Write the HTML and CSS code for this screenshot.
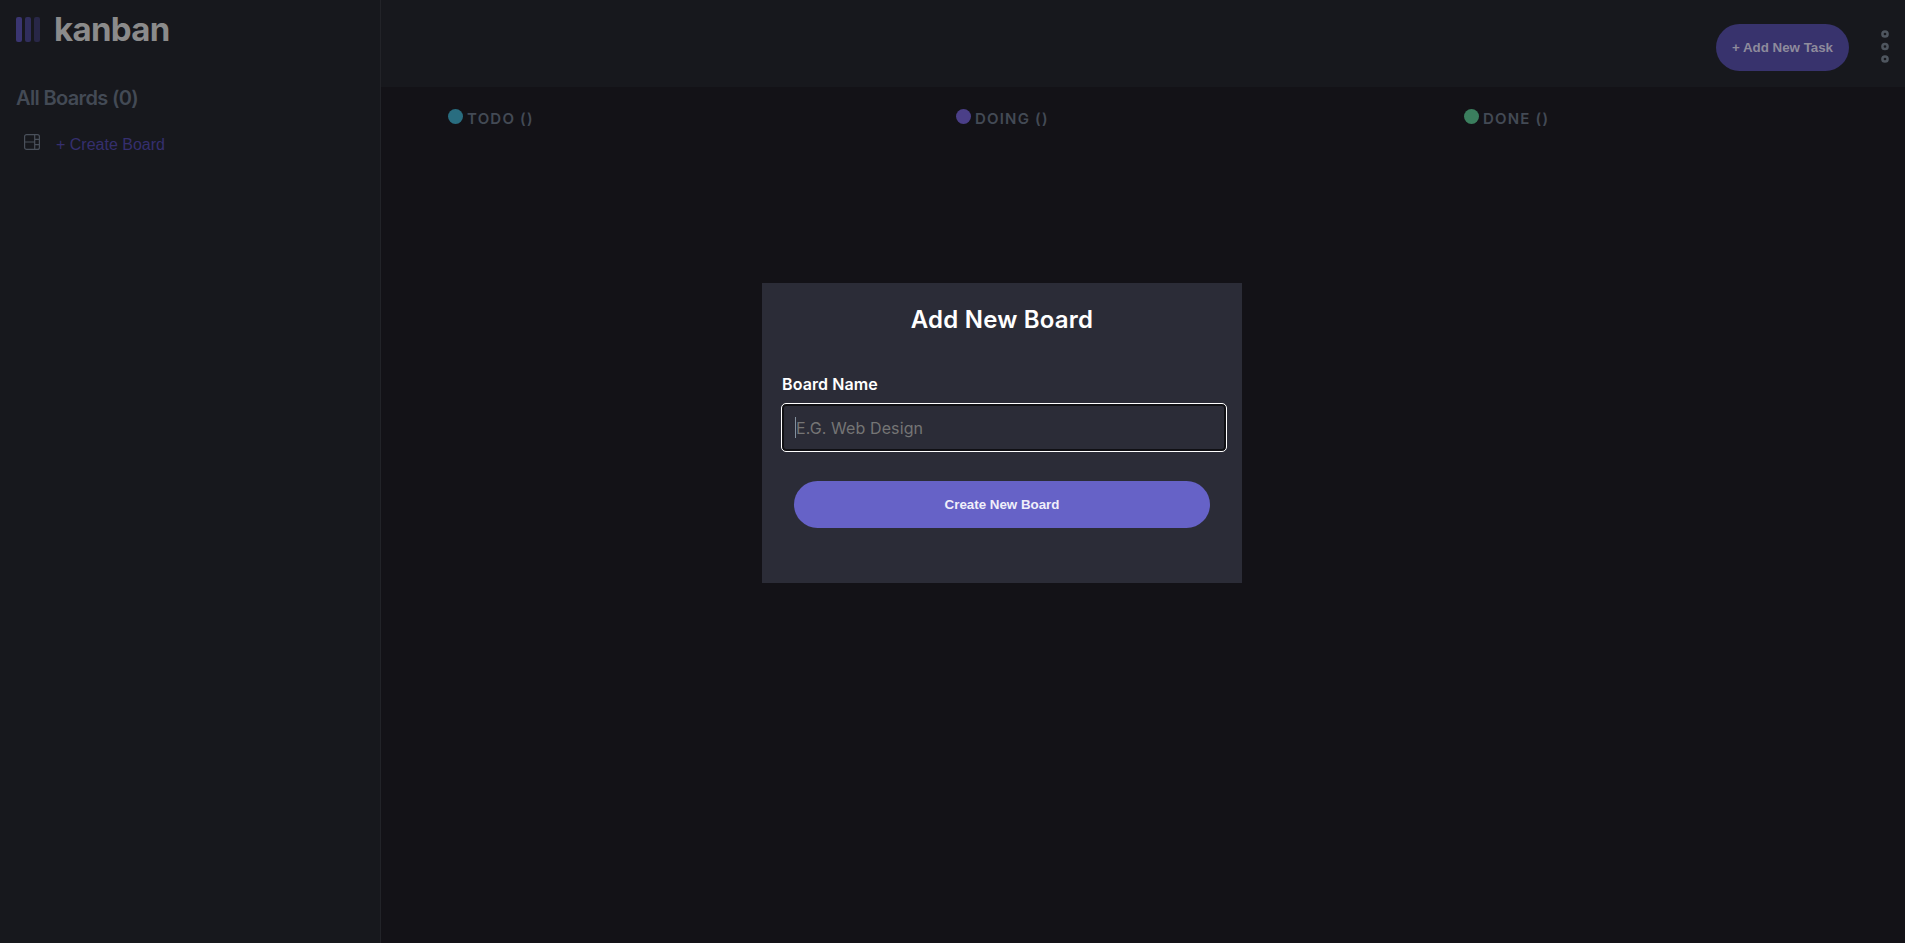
FILE: index.html
```html
<!DOCTYPE html>
<html lang="en">
<head>
<meta charset="utf-8">
<title>Kanban</title>
<link rel="stylesheet" href="styles.css">
</head>
<body>
<div class="app">
  <aside class="sidebar">
    <div class="logo">
      <svg class="logo-mark" width="24" height="25" viewBox="0 0 24 25"><g fill="#3a3571"><rect width="6" height="25" rx="2"/><rect x="9" width="6" height="25" rx="2" opacity=".75"/><rect x="18" width="6" height="25" rx="2" opacity=".5"/></g></svg>
      <span class="logo-text">kanban</span>
    </div>
    <h2 class="boards-title">All Boards (0)</h2>
    <div class="create-row">
      <svg width="16" height="16" viewBox="0 0 16 16" fill="none" stroke="#4a505b" stroke-width="1.2"><rect x=".6" y=".6" width="14.8" height="14.8" rx="2"/><path d="M10.7.6v14.8M.6 8h10.1M10.7 5.3h4.7M10.7 10.7h4.7"/></svg>
      <a class="create-link">+ Create Board</a>
    </div>
  </aside>
  <div class="content">
    <header class="header">
      <button class="button add-task">+ Add New Task</button>
      <svg class="menu" width="8" height="33" viewBox="0 0 8 33" fill="none" stroke="#4f565f" stroke-width="2.5"><circle cx="4" cy="4" r="2.6"/><circle cx="4" cy="16.5" r="2.6"/><circle cx="4" cy="29" r="2.6"/></svg>
    </header>
    <main class="columns">
      <section class="column"><span class="dot todo"></span><h3 class="column-title">TODO ()</h3></section>
      <section class="column"><span class="dot doing"></span><h3 class="column-title">DOING ()</h3></section>
      <section class="column"><span class="dot done"></span><h3 class="column-title">DONE ()</h3></section>
    </main>
  </div>
</div>
<form class="modal">
  <h1 class="modal-title">Add New Board</h1>
  <label class="label" for="name">Board Name</label>
  <div class="field"><span class="caret"></span><input class="input" id="name" placeholder="E.G. Web Design"></div>
  <button class="button create-board" type="button">Create New Board</button>
</form>
</body>
</html>
```
FILE: styles.css
```css
* { box-sizing: border-box; }
body { margin: 0; background: #131217; font-family: Inter, "Liberation Sans", sans-serif; overflow: hidden; }
h1, h2, h3 { margin: 0; }
.app { display: flex; height: 943px; }
.sidebar { width: 381px; flex: none; background: #17181d; border-right: 1px solid #222328; padding: 10px 16px; }
.logo { display: flex; height: 40px; gap: 14px; }
.logo-mark { margin-top: 7px; }
.logo-text { font-size: 33px; line-height: 38px; font-weight: 700; color: #8b8b8b; letter-spacing: -0.7px; }
.boards-title { margin-top: 34px; font-size: 20px; line-height: 28px; font-weight: 600; color: #434a55; letter-spacing: -0.65px; white-space: nowrap; }
.create-row { display: flex; align-items: center; margin-top: 20px; padding-left: 8px; gap: 16px; height: 20px; }
.create-link { font: 16px/20px "Liberation Sans", sans-serif; color: #352f6e; padding-top: 5px; }
.content { flex: 1; }
.header { height: 87px; background: #17181d; display: flex; justify-content: flex-end; align-items: flex-start; padding: 24px 16px 0 0; gap: 32px; }
.button { border: 0; border-radius: 24px; height: 47px; font: bold 13.333px "Liberation Sans", sans-serif; padding: 0; }
.add-task { width: 133px; background: #38336d; color: #8e8b9c; }
.menu { margin-top: 6px; }
.columns { display: grid; grid-template-columns: repeat(3, 1fr); padding-top: 22px; }
.column { display: flex; padding-left: 67px; gap: 4px; }
.dot { width: 15px; height: 15px; border-radius: 50%; }
.todo { background: #296d80; }
.doing { background: #4b3f88; }
.done { background: #3b7e5e; }
.column-title { font-size: 15px; line-height: 20px; font-weight: 600; color: #434a55; letter-spacing: 1.2px; white-space: nowrap; }
.modal { position: absolute; left: 762px; top: 283px; width: 480px; height: 300px; background: #2b2c37; padding: 21px 20px 20px; display: flex; flex-direction: column; }
.modal-title { font-size: 24px; line-height: 32px; font-weight: 600; color: #fff; text-align: center; letter-spacing: 0.2px; }
.label { margin-top: 37px; font-size: 16px; line-height: 22px; font-weight: 600; color: #fff; letter-spacing: 0.1px; }
.field { display: flex; align-items: center; width: 446px; height: 49px; margin: 8px 0 0 -1px; padding: 0 13px; border: 1px solid #fff; border-radius: 5px; box-shadow: inset 0 0 0 2px #101014; }
.caret { width: 1px; height: 21px; background: #83909d; }
.input { flex: 1; border: 0; outline: 0; padding: 0; background: transparent; color: #828fa3; font: 16px Inter, "Liberation Sans", sans-serif; letter-spacing: 0.1px; }
.input::placeholder { color: #757575; }
.create-board { width: 416px; margin: 29px 0 0 12px; flex: none; background: #6662c7; color: #f0effa; }
```
